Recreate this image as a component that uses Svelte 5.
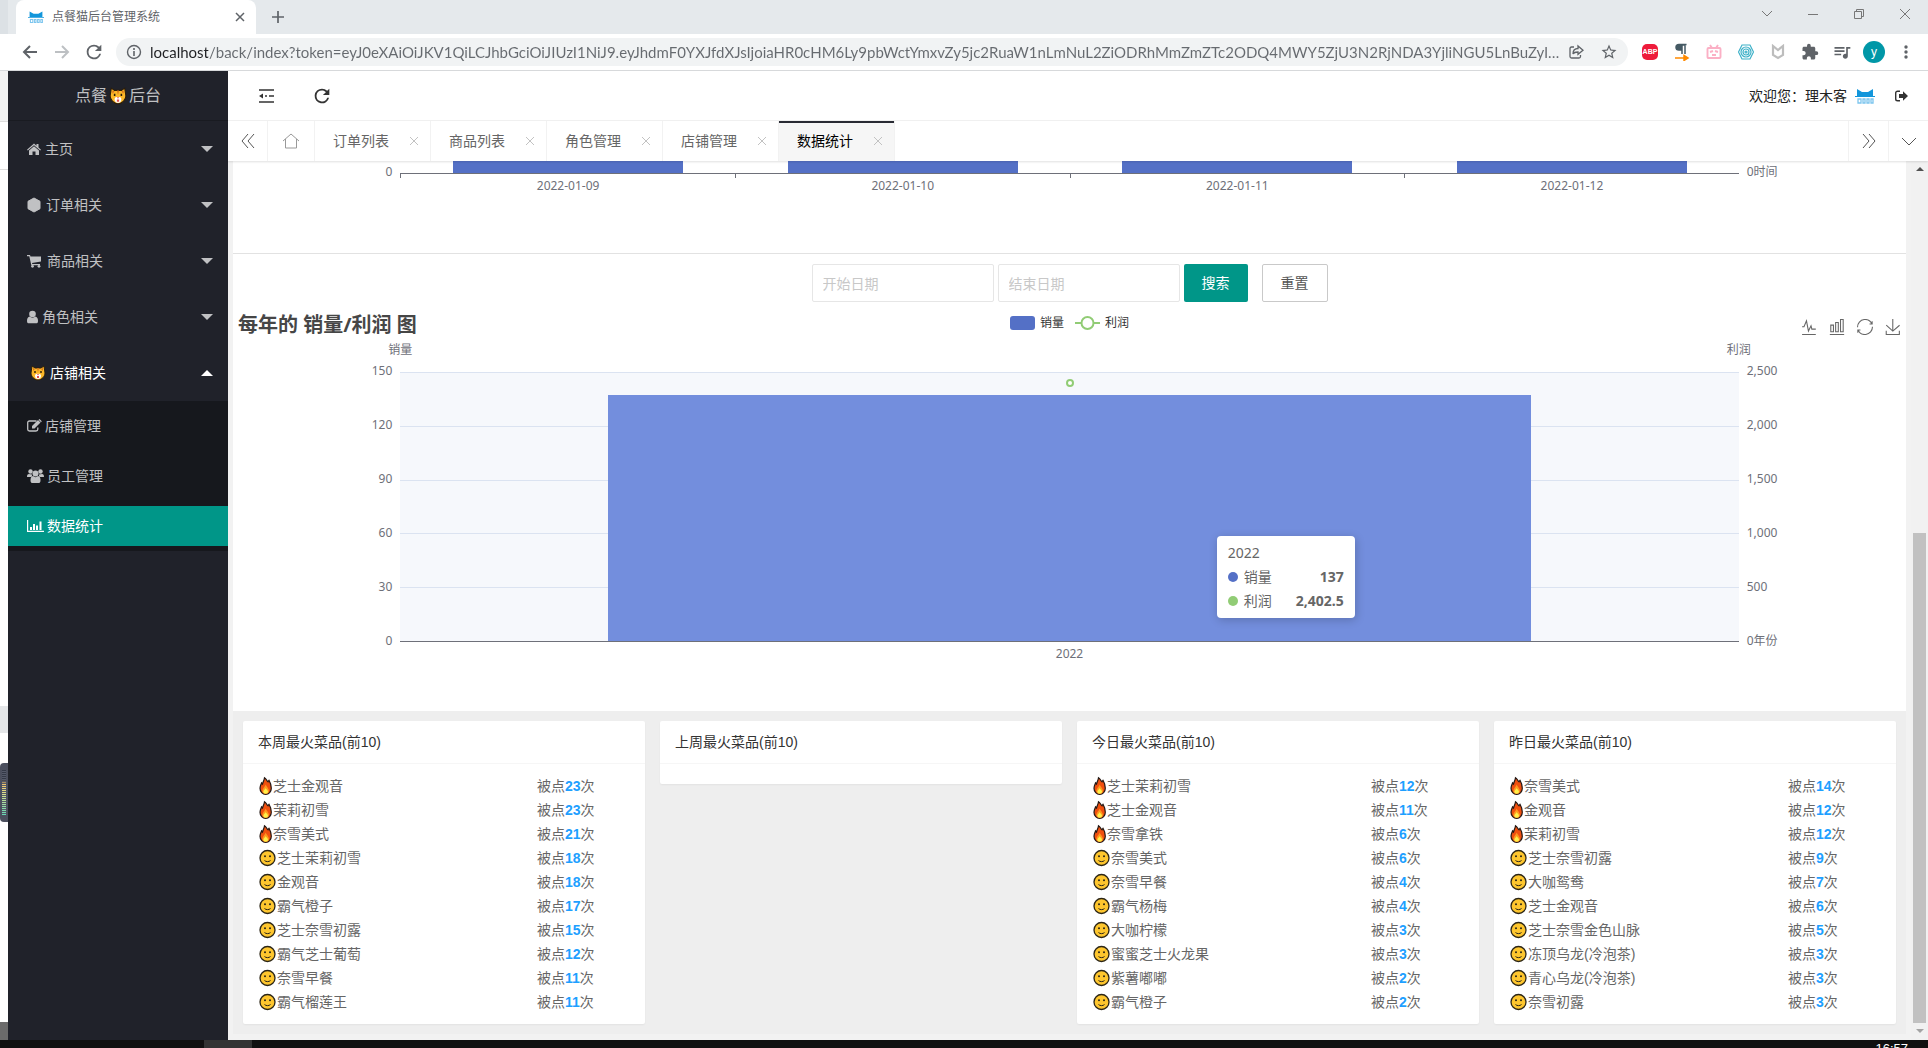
<script>
  let url = $state('localhost/back/index?token=eyJ0eXAiOiJKV1QiLCJhbGciOiJIUzI1NiJ9.eyJhdmF0YXJfdXJsIjoiaHR0cHM6Ly9pbWctYmxvZy5jc2RuaW1nLmNuL2ZiODRhMmZmZTc2ODQ4MWY5ZjU3N2RjNDA3YjliNGU5LnBuZyIsIn...');
  let start = $state('');
  let end = $state('');
  let active = $state('数据统计');

  const menu = [
    { label: '主页', icon: 'home' },
    { label: '订单相关', icon: 'cube' },
    { label: '商品相关', icon: 'cart' },
    { label: '角色相关', icon: 'user' },
    { label: '店铺相关', icon: 'cat', open: true },
  ];
  const children = [
    { label: '店铺管理', icon: 'edit' },
    { label: '员工管理', icon: 'users' },
    { label: '数据统计', icon: 'chart' },
  ];
  const tabs = ['订单列表', '商品列表', '角色管理', '店铺管理', '数据统计'];

  const days = ['2022-01-09', '2022-01-10', '2022-01-11', '2022-01-12'];
  const sales = 137;
  const profit = 2402.5;
  const leftTicks = ['150', '120', '90', '60', '30', '0'];
  const rightTicks = ['2,500', '2,000', '1,500', '1,000', '500', '0年份'];

  const tools = [
    { name: '切换为折线图', d: 'M4.1,28.9h7.1l9.3-22l7.4,38l9.7-19.7l3,12.8h14.9M4.1,58h51.4' },
    { name: '切换为柱状图', d: 'M6.7,22.9h10V48h-10V22.9zM24.9,13h10v35h-10V13zM43.2,2h10v46h-10V2zM3.1,58h53.7' },
    { name: '还原', d: 'M47,18.9h9.8V8.7M56.3,20.1C52.1,9,40.5,0.6,26.8,2.1C12.6,3.7,1.6,16.2,2.1,30.6M13,41.1H3.1v10.2M3.7,39.9c4.2,11.1,15.8,19.5,29.5,18c14.2-1.6,25.2-14.1,24.7-28.5' },
    { name: '保存为图片', d: 'M4.7,22.9L29.3,45.5L54.7,23.4M4.6,43.6L4.6,58L53.8,58L53.8,43.6M29.2,45.1L29.2,0' },
  ];

  const cards = [
    {
      title: '本周最火菜品(前10)',
      rows: [['芝士金观音', 23], ['茉莉初雪', 23], ['奈雪美式', 21], ['芝士茉莉初雪', 18], ['金观音', 18],
        ['霸气橙子', 17], ['芝士奈雪初露', 15], ['霸气芝士葡萄', 12], ['奈雪早餐', 11], ['霸气榴莲王', 11]],
    },
    { title: '上周最火菜品(前10)', rows: [] },
    {
      title: '今日最火菜品(前10)',
      rows: [['芝士茉莉初雪', 12], ['芝士金观音', 11], ['奈雪拿铁', 6], ['奈雪美式', 6], ['奈雪早餐', 4],
        ['霸气杨梅', 4], ['大咖柠檬', 3], ['蜜蜜芝士火龙果', 3], ['紫薯嘟嘟', 2], ['霸气橙子', 2]],
    },
    {
      title: '昨日最火菜品(前10)',
      rows: [['奈雪美式', 14], ['金观音', 12], ['茉莉初雪', 12], ['芝士奈雪初露', 9], ['大咖鸳鸯', 7],
        ['芝士金观音', 6], ['芝士奈雪金色山脉', 5], ['冻顶乌龙(冷泡茶)', 3], ['青心乌龙(冷泡茶)', 3], ['奈雪初露', 3]],
    },
  ];

  const reload = 'M17.65 6.35A7.96 7.96 0 0 0 12 4a8 8 0 1 0 7.73 10h-2.08A6 6 0 1 1 12 6c1.66 0 3.14.69 4.22 1.78L13 11h7V4z';
  const reset = () => { start = ''; end = ''; };
</script>

{#snippet logo(size)}
  <svg width={size} height={size} viewBox="0 0 20 20">
    <path d="M2 3l5 3h6l5-3v7h2v1H0v-1h2z" fill="#1296db" />
    <path d="M3 13h3v4H3zM8 13h2v4H8zM12 13h2v4h-2zM16 13h2v4h-2z" fill="none" stroke="#7cc5ee" stroke-width="1.3" />
  </svg>
{/snippet}

{#snippet cat(size)}
  <svg width={size} height={size} viewBox="0 0 16 16">
    <path d="M2 1l3 2h6l3-2 1 7c0 3-3 7-7 7s-7-4-7-7z" fill="#fbb829" stroke="#2b1d0c" />
    <path d="M7 3h2l-1 4zM3 3l2 1-2 2zM13 3l-2 1 2 2z" fill="#d9731a" />
    <path d="M5 11c0-2 1.500-2.500 3-2 1.500-.5 3 0 3 2s-1.500 3-3 3-3-1-3-3z" fill="#fff" />
    <path d="M5 6v2M11 6v2" stroke="#2b1d0c" stroke-width="1.4" />
    <path d="M7 9h2l-1 1.5zM7 11h2v2H7z" fill="#e2504c" />
  </svg>
{/snippet}

{#snippet fire()}
  <svg width="15" height="20" viewBox="0 0 15 20">
    <path d="M6.5 1.8c2 1 2 3 3.500 4 .3-.7.6-1 1-1.500 1.500 2.500 2.300 5 2.300 8 0 3.500-2.500 6-5.600 6S2 15.800 2 12.300c0-2.300 1-3.600 1.500-5.300l1 1C5 6 6.300 4 6.500 1.800z" fill="#f0500f" stroke="#231815" stroke-width="1.2" />
    <path d="M7.700 8.500c.5 2 3.300 4 3.300 6.300 0 1.800-1.500 3-3.300 3s-3.400-1.200-3.400-3c0-2.300 3-4.300 3.400-6.300z" fill="#fe9a1f" />
    <path d="M7.700 12c.3 1.300 2.300 2.200 2.300 3.800 0 1.200-1 2-2.300 2s-2.300-.8-2.300-2c0-1.600 2-2.500 2.300-3.800z" fill="#fff04a" />
  </svg>
{/snippet}

{#snippet smile()}
  <svg width="19" height="20" viewBox="0 0 19 20">
    <circle cx="9.5" cy="10" r="7.5" fill="#fec62e" stroke="#2b2516" stroke-width="1.3" />
    <circle cx="7" cy="8.3" r="1" fill="#2b2516" /><circle cx="12" cy="8.300" r="1" fill="#2b2516" />
    <path d="M6.5 12.500c1.500 1.500 4.500 1.500 6 0" fill="none" stroke="#2b2516" />
  </svg>
{/snippet}

{#snippet icon(name)}
  {#if name === 'cat'}
    <span class="cat">{@render cat(16)}</span>
  {:else if name === 'home'}
    <svg width="14" height="14" viewBox="0 0 14 14"><path d="M7 1.500l2.500 2.200V2h2v3.500L14 7.700l-.8.900L7 3.300.800 8.600 0 7.700zM2 8.500l5-4.200 5 4.200V13H8.500V9.500h-3V13H2z" /></svg>
  {:else if name === 'cube'}
    <svg width="15" height="16" viewBox="0 0 15 16"><path d="M7 1l6 3.300v7.400L7 15l-6-3.300V4.300z" stroke="currentColor" stroke-linejoin="round" /></svg>
  {:else if name === 'cart'}
    <svg width="16" height="14" viewBox="0 0 16 14"><path d="M0 1h3l.5 1.500H14v5L5 9l.3 1H13v1.200H4.300L2.300 2.300H0z" /><circle cx="5.500" cy="12.300" r="1.400" /><circle cx="12" cy="12.300" r="1.400" /></svg>
  {:else if name === 'user'}
    <svg width="11" height="14" viewBox="0 0 11 14"><circle cx="5.500" cy="4" r="3.300" /><path d="M2.500 6.500c2 1.500 4 1.500 6 0C10.500 7 11 9 11 11s-1 2.300-2 2.300H2c-1 0-2-.3-2-2.300s.5-4 2.500-4.500z" /></svg>
  {:else if name === 'edit'}
    <svg width="15" height="14" viewBox="0 0 15 14"><path d="M9.500 2H2.500C1.500 2 .7 2.800.7 3.800v6.400c0 1 .8 1.800 1.800 1.800h6.500c1 0 1.800-.8 1.800-1.800V8.500" fill="none" stroke="currentColor" stroke-width="1.300" /><path d="M5 7l6-6 2.500 2.500-6 6H5zM11.600.7L12.500 0 14.800 2.200l-.8 1z" /></svg>
  {:else if name === 'users'}
    <svg width="17" height="14" viewBox="0 0 17 14"><circle cx="3.500" cy="2.500" r="2.200" /><circle cx="13.500" cy="2.500" r="2.200" /><circle cx="8.500" cy="4.500" r="3" /><path d="M0 8c0-2 .5-3 2-3l3 .5C5 7 5 7.500 4 8zM17 8c0-2-.5-3-2-3l-3 .5c0 1.500 0 2 1 2.500zM6 7c2 1.500 3 1.500 5 0 2 .5 2.500 2 2.500 4.500 0 2-1 2.500-2 2.500h-6c-1 0-2-.5-2-2.500C3.500 9 4 7.500 6 7z" /></svg>
  {:else}
    <svg width="17" height="14" viewBox="0 0 17 14"><path d="M0 1h1.200v10.800H17V13H0zM3 8h2v3H3zM6 5h2v6H6zM9 6.500h2V11H9zM12.500 2.500h2V11h-2z" /></svg>
  {/if}
{/snippet}

<div class="screen">
  <div class="strip">
    <div class="browser-tab">
      {@render logo(16)}
      <span>点餐猫后台管理系统</span>
      <button aria-label="关闭标签页"><svg width="10" height="10" viewBox="0 0 10 10"><path d="M1 1l8 8M9 1L1 9" stroke="#5f6368" stroke-width="1.5" /></svg></button>
    </div>
    <button class="plus" aria-label="新标签页"><svg width="14" height="14" viewBox="0 0 14 14"><path d="M7 1v12M1 7h12" stroke="#5f6368" stroke-width="1.7" /></svg></button>
    <div class="window-buttons">
      <button aria-label="搜索标签页"><svg width="12" height="12" viewBox="0 0 12 12"><path d="M1 3l5 5 5-5" /></svg></button>
      <button aria-label="最小化"><svg width="12" height="12" viewBox="0 0 12 12"><path d="M1 6.500h10" /></svg></button>
      <button aria-label="还原窗口"><svg width="12" height="12" viewBox="0 0 12 12"><path d="M1.500 3.500h7v7h-7zM3.500 3.500v-2h7v7h-2" /></svg></button>
      <button aria-label="关闭"><svg width="12" height="12" viewBox="0 0 12 12"><path d="M1 1l10 10M11 1L1 11" /></svg></button>
    </div>
  </div>

  <div class="toolbar">
    <button aria-label="后退"><svg width="16" height="16" viewBox="0 0 16 16"><path d="M15 8H2M8 2L2 8l6 6" fill="none" stroke="#5f6368" stroke-width="2" /></svg></button>
    <button aria-label="前进"><svg width="16" height="16" viewBox="0 0 16 16"><path d="M1 8h13M8 2l6 6-6 6" fill="none" stroke="#bdc0c3" stroke-width="2" /></svg></button>
    <button aria-label="刷新页面"><svg width="22" height="22" viewBox="0 0 24 24"><path d={reload} fill="#5f6368" /></svg></button>
    <div class="omnibox">
      <svg width="16" height="16" viewBox="0 0 16 16"><circle cx="8" cy="8" r="6.500" fill="none" stroke="#5f6368" stroke-width="1.4" /><path d="M8 7v5M8 4v2" stroke="#5f6368" stroke-width="1.6" /></svg>
      <input aria-label="网址" bind:value={url} />
      <svg width="16" height="16" viewBox="0 0 16 16" fill="none" stroke="#5f6368" stroke-width="1.3"><path d="M6 3H3.500C2.500 3 2 3.500 2 4.500v8c0 1 .5 1.500 1.500 1.500H11c1 0 1.500-.5 1.500-1.500V11" /><path d="M5 10c0-4 2-5.500 5-5.500V2l5 4.200-5 4.100V8C8 8 6 8 5 10z" /></svg>
      <svg width="18" height="18" viewBox="0 0 24 24"><path fill="#5f6368" d="M22 9.240l-7.190-.62L12 2 9.190 8.630 2 9.240l5.460 4.730L5.820 21 12 17.270 18.180 21l-1.630-7.030L22 9.240zM12 15.400l-3.760 2.270 1-4.280-3.320-2.880 4.380-.38L12 6.100l1.710 4.040 4.380.38-3.320 2.880 1 4.280L12 15.400z" /></svg>
    </div>
    <div class="extensions">
      <span class="abp">ABP</span>
      <svg width="16" height="18" viewBox="0 0 16 18"><path d="M11 1v10M8 1v10M12.500 1.500H5C1 1.500 1 7 5 7h3V2z" fill="#455a64" stroke="#455a64" stroke-width="1.5" /><path d="M1 15h11M10 12.500l4 2.500-4 2.500z" fill="#ff8a00" stroke="#ff8a00" stroke-width="1.5" /></svg>
      <svg width="16" height="16" viewBox="0 0 16 16" fill="none" stroke="#fbb0c5" stroke-width="1.9"><rect x="1.500" y="4" width="13" height="10" rx="1" /><path d="M4 1l2 3M12 1l-2 3M4 8l3-1M12 8L9 7M6 11h4" /></svg>
      <svg width="16" height="16" viewBox="0 0 16 16" fill="none" stroke="#3eb1c8" stroke-width="1.2"><path d="M4 1h8l3.500 7-3.500 7H4L.5 8z" /><circle cx="8" cy="8" r="5" /><circle cx="8" cy="8" r="3" /><circle cx="8" cy="8" r="1" /></svg>
      <svg width="14" height="16" viewBox="0 0 14 16" fill="none" stroke="#bdbdbd" stroke-width="2.2"><path d="M2 11V2l5 4 5-4v9l-5 3z" /></svg>
      <svg width="18" height="18" viewBox="0 0 24 24" fill="#5f6368"><path d="M20.500 11H19V7c0-1.100-.9-2-2-2h-4V3.500a2.500 2.500 0 0 0-5 0V5H4c-1.100 0-2 .9-2 2v3.800h1.500c1.490 0 2.700 1.210 2.700 2.700S4.990 16.200 3.500 16.200H2V20c0 1.100.9 2 2 2h3.800v-1.500c0-1.490 1.210-2.700 2.700-2.700s2.700 1.210 2.700 2.700V22H17c1.100 0 2-.9 2-2v-4h1.500a2.500 2.500 0 0 0 0-5z" /></svg>
      <svg width="20" height="20" viewBox="0 0 24 24" fill="#5f6368"><path d="M15 6H3v2h12V6zm0 4H3v2h12v-2zM3 16h8v-2H3v2zM17 6v8.180c-.31-.11-.65-.18-1-.18-1.660 0-3 1.340-3 3s1.340 3 3 3 3-1.340 3-3V8h3V6h-5z" /></svg>
      <span class="avatar">y</span>
      <svg width="4" height="16" viewBox="0 0 4 16" fill="#5f6368"><circle cx="2" cy="3" r="1.700" /><circle cx="2" cy="8" r="1.700" /><circle cx="2" cy="13" r="1.700" /></svg>
    </div>
  </div>

  <div class="app">
    <div class="desktop">
      <div class="light"></div>
      <div class="outline"></div>
      <div class="spacer"></div>
      <div class="grey"></div>
      <div class="meter"></div>
      <div class="spacer small"></div>
      <div class="dark"></div>
    </div>

    <aside>
      <h1>点餐{@render cat(18)}后台</h1>
      <nav>
        {#each menu as item}
          <a href="#{item.label}" class="item" class:open={item.open}>
            {@render icon(item.icon)}
            <span class="label">{item.label}</span>
            <i class="caret"></i>
          </a>
        {/each}
        <div class="submenu">
          {#each children as item}
            <a href="#{item.label}" class:current={item.label === active}>
              {@render icon(item.icon)}<span>{item.label}</span>
            </a>
          {/each}
        </div>
      </nav>
    </aside>

    <main>
      <header>
        <button aria-label="收起菜单"><svg width="16" height="14" viewBox="0 0 16 14"><path d="M1 1h15M7 7h2M11 7h5M1 13h15" stroke="#333" stroke-width="1.6" /><path d="M1 7l4-2.500v5z" fill="#333" /></svg></button>
        <button aria-label="刷新"><svg width="22" height="22" viewBox="0 0 24 24"><path d={reload} fill="#333" /></svg></button>
        <div class="welcome">
          <span>欢迎您：理木客</span>
          {@render logo(20)}
          <button aria-label="退出"><svg width="14" height="12" viewBox="0 0 14 12"><path d="M5 1.200H2.500C1.500 1.200.7 2 .7 3v6c0 1 .8 1.800 1.800 1.800H5" fill="none" stroke="#333" stroke-width="1.4" /><path d="M4 4h4V1.200L13 6l-5 4.800V8H4z" fill="#333" /></svg></button>
        </div>
      </header>

      <div class="page-tabs">
        <button class="side" aria-label="向左"><svg width="14" height="16" viewBox="0 0 14 16"><path d="M7 1L1 8l6 7M13 1L7 8l6 7" /></svg></button>
        <button class="home" aria-label="首页"><svg width="18" height="16" viewBox="0 0 18 16"><path d="M1 8l8-7 8 7M3.500 6v9h11V6" /></svg></button>
        {#each tabs as tab}
          <div class="tab" class:active={tab === active}>
            <button onclick={() => (active = tab)}>{tab}</button>
            <button class="close" aria-label="关闭{tab}"><svg width="8" height="8" viewBox="0 0 8 8"><path d="M0 0l8 8M8 0L0 8" /></svg></button>
          </div>
        {/each}
        <span class="fill"></span>
        <button class="side right" aria-label="向右"><svg width="14" height="16" viewBox="0 0 14 16"><path d="M1 1l6 7-6 7M7 1l6 7-6 7" /></svg></button>
        <button class="side right" aria-label="更多"><svg width="14" height="16" viewBox="0 0 14 16"><path d="M0 5l7 7 7-7" /></svg></button>
      </div>

      <div class="view">
        <div class="page">
          <section class="panel">
            <div class="daily">
              <div class="axis left"><span>0</span></div>
              <div class="plot-days">
                {#each days as day}
                  <div class="day"><div class="bar"></div><span>{day}</span></div>
                {/each}
              </div>
              <div class="axis right"><span>0时间</span></div>
            </div>

            <form onsubmit={(e) => e.preventDefault()}>
              <input type="text" placeholder="开始日期" aria-label="开始日期" bind:value={start} />
              <input type="text" placeholder="结束日期" aria-label="结束日期" bind:value={end} />
              <button class="search">搜索</button>
              <button type="button" class="reset" onclick={reset}>重置</button>
            </form>

            <div class="yearly">
              <div class="chart-head">
                <h2>每年的 销量/利润 图</h2>
                <div class="legend">
                  <i class="swatch"></i><span>销量</span>
                  <svg width="25" height="14" viewBox="0 0 25 14"><path d="M0 7h25" stroke="#91cc75" stroke-width="2" /><circle cx="12.500" cy="7" r="6" fill="#fff" stroke="#91cc75" stroke-width="2" /></svg><span>利润</span>
                </div>
                <div class="tools">
                  {#each tools as tool}
                    <button aria-label={tool.name}><svg width="16" height="16" viewBox="0 0 60 60"><path d={tool.d} /></svg></button>
                  {/each}
                </div>
              </div>
              <div class="names"><span>销量</span><span>利润</span></div>
              <div class="chart">
                <div class="axis left">{#each leftTicks as tick}<span>{tick}</span>{/each}</div>
                <div class="plot">
                  <div class="lines">{#each leftTicks.slice(1) as tick (tick)}<div></div>{/each}</div>
                  <div class="bar" style="height: {sales / 150 * 100}%"></div>
                  <svg class="point" style="bottom: {profit / 2500 * 100}%" width="8" height="8" viewBox="0 0 8 8"><circle cx="4" cy="4" r="3" fill="#fff" stroke="#91cc75" stroke-width="2" /></svg>
                  <div class="tooltip">
                    <div>2022</div>
                    <div class="line"><i></i>销量<b>{sales}</b></div>
                    <div class="line green"><i></i>利润<b>{profit.toLocaleString('en-US')}</b></div>
                  </div>
                </div>
                <div class="axis right">{#each rightTicks as tick}<span>{tick}</span>{/each}</div>
              </div>
              <div class="year">2022</div>
            </div>
          </section>

          <section class="cards">
            {#each cards as card}
              <article>
                <h3>{card.title}</h3>
                <ul>
                  {#each card.rows as [name, count], i}
                    <li>
                      <span class="dish">{#if i < 3}{@render fire()}{:else}{@render smile()}{/if}{name}</span>
                      <span>被点<b>{count}</b>次</span>
                    </li>
                  {/each}
                </ul>
              </article>
            {/each}
          </section>
        </div>
        <div class="scrollbar">
          <svg width="8" height="5" viewBox="0 0 8 5"><path d="M4 0l4 4H0z" fill="#505050" /></svg>
          <div class="track"><div class="thumb"></div></div>
          <svg width="8" height="5" viewBox="0 0 8 5"><path d="M0 0h8L4 4z" fill="#a3a3a3" /></svg>
        </div>
      </div>
    </main>
  </div>

  <div class="taskbar"><span class="task"></span><time>16:57</time></div>
</div>

<style>
  :global(body) {
    margin: 0;
  }
  .screen, .screen :global(*) {
    box-sizing: border-box;
  }
  .screen {
    display: flex;
    flex-direction: column;
    height: 100vh;
    overflow: hidden;
    background: #fff;
    color: #666;
    font: 14px/24px "Liberation Sans", "Noto Sans CJK SC", sans-serif;
  }
  button {
    display: flex;
    align-items: center;
    justify-content: center;
    padding: 0;
    border: 0;
    background: none;
    color: inherit;
    font: inherit;
    cursor: pointer;
  }
  h1, h2, h3, ul {
    margin: 0;
    padding: 0;
    font-weight: normal;
    list-style: none;
  }
  a {
    color: inherit;
    text-decoration: none;
  }
  svg {
    flex: none;
  }

  .strip {
    display: flex;
    flex: none;
    align-items: center;
    height: 34px;
    padding-left: 8px;
    border-left: 8px solid #dce1e5;
    background: #e5e9ec;
  }
  .browser-tab {
    display: flex;
    align-items: center;
    gap: 8px;
    width: 240px;
    height: 34px;
    padding: 0 11px 0 12px;
    border-radius: 8px 8px 0 0;
    background: #fff;
    color: #5f6368;
    font-size: 12px;
  }
  .browser-tab span {
    flex: 1;
  }
  .plus {
    margin-left: 15px;
  }
  .window-buttons {
    display: flex;
    margin-left: auto;
    padding-bottom: 6px;
  }
  .window-buttons button {
    width: 46px;
    height: 28px;
  }
  .window-buttons path {
    fill: none;
    stroke: #777;
  }

  .toolbar {
    display: flex;
    flex: none;
    align-items: center;
    height: 37px;
    padding-left: 14px;
    border-bottom: 1px solid #d7d9db;
  }
  .toolbar > button {
    width: 32px;
    height: 28px;
  }
  .omnibox {
    display: flex;
    flex: 1;
    align-items: center;
    gap: 16px;
    height: 28px;
    margin-left: 6px;
    padding: 0 10px;
    border-radius: 14px;
    background: #f1f3f4;
  }
  .omnibox input {
    flex: 1;
    min-width: 0;
    margin: 0 -8px;
    padding: 0;
    border: 0;
    outline: 0;
    background: linear-gradient(90deg, #202124 58px, #666a6f 58px);
    background-clip: text;
    color: transparent;
    font: 15px/24px Lato, sans-serif;
    text-overflow: ellipsis;
  }
  .extensions {
    display: grid;
    grid-template-columns: repeat(9, 32px);
    align-items: center;
    justify-items: center;
    padding: 0 6px;
  }
  .abp {
    width: 16px;
    border-radius: 5px;
    background: #ee1b3b;
    color: #fff;
    font-size: 7px;
    font-weight: bold;
    line-height: 16px;
    text-align: center;
  }
  .avatar {
    width: 22px;
    border-radius: 50%;
    background: #0097a7;
    color: #fff;
    font-size: 12px;
    line-height: 22px;
    text-align: center;
  }

  .app {
    display: flex;
    flex: 1;
    min-height: 0;
  }
  .desktop {
    display: flex;
    flex: none;
    flex-direction: column;
    width: 8px;
  }
  .spacer {
    flex: 536;
  }
  .spacer.small {
    flex: 200;
  }
  .light {
    height: 50px;
    background: #f2f2f2;
  }
  .outline {
    height: 49px;
    border: solid #ddd;
    border-width: 1px 0;
  }
  .grey {
    height: 27px;
    margin-bottom: 30px;
    background: #e4e6e8;
  }
  .meter {
    height: 59px;
    border: solid #4b4f5e;
    border-width: 7px 2px;
    border-radius: 4px 0 0 4px;
    background:
      repeating-linear-gradient(transparent 0 1px, #555a6a 1px 2px),
      linear-gradient(#333846 10px, #f0c36a 14px, #d9e08a 24px, #63d8b5);
  }
  .dark {
    height: 18px;
    background: #6b6b6b;
  }

  aside {
    flex: none;
    width: 220px;
    background: #20222a;
    color: #c0c1c3;
  }
  h1 {
    display: flex;
    align-items: center;
    justify-content: center;
    gap: 2px;
    height: 50px;
    border-bottom: 1px solid #191b21;
    font-size: 16px;
  }
  .item {
    display: flex;
    align-items: center;
    height: 56px;
    padding: 0 15px 0 19px;
  }
  aside svg {
    fill: currentColor;
  }
  .label {
    flex: 1;
    margin-left: 4px;
  }
  .cat {
    display: flex;
    margin-left: 3px;
  }
  .caret {
    border: 6px solid transparent;
    border-top-color: currentColor;
    border-bottom: 0;
  }
  .open {
    color: #fff;
  }
  .open .caret {
    border-top: 0;
    border-bottom: 6px solid currentColor;
  }
  .submenu {
    display: flex;
    flex-direction: column;
    gap: 10px;
    padding: 5px 0;
    background: #16181d;
  }
  .submenu a {
    display: flex;
    align-items: center;
    gap: 3px;
    height: 40px;
    padding-left: 19px;
  }
  .submenu .current {
    background: #009688;
    color: #fff;
  }

  main {
    display: flex;
    flex: 1;
    flex-direction: column;
    min-width: 0;
  }
  header {
    display: flex;
    flex: none;
    align-items: center;
    gap: 37px;
    height: 50px;
    padding: 0 19px 0 30px;
    border-bottom: 1px solid #f2f2f2;
    color: #222;
  }
  .welcome {
    display: flex;
    align-items: center;
    gap: 8px;
    margin-left: auto;
  }
  .welcome button {
    margin-left: 12px;
  }
  .page-tabs {
    z-index: 1;
    display: flex;
    flex: none;
    height: 40px;
    box-shadow: 0 1px 2px rgba(0, 0, 0, .12);
  }
  .page-tabs path {
    fill: none;
    stroke: #555;
  }
  .page-tabs .side, .page-tabs .home {
    width: 40px;
    border-right: 1px solid #f2f2f2;
  }
  .page-tabs .home {
    width: 47px;
  }
  .page-tabs .right {
    border-right: 0;
    border-left: 1px solid #f2f2f2;
  }
  .tab {
    display: flex;
    align-items: center;
    justify-content: space-between;
    width: 116px;
    padding: 0 12px 0 18px;
    border-right: 1px solid #f2f2f2;
  }
  .tab.active {
    background: #f6f6f6;
    box-shadow: inset 0 2px #292b34;
    color: #000;
  }
  .page-tabs .home path {
    stroke: #999;
  }
  .page-tabs .close path {
    stroke: #c2c2c2;
  }
  .fill {
    flex: 1;
  }

  .view {
    display: flex;
    flex: 1;
    min-height: 0;
    background: #f2f2f2;
  }
  .page {
    flex: 1;
    min-width: 0;
    padding: 0 5px;
  }
  .panel {
    padding-bottom: 49px;
    background: #fff;
    color: #6e7079;
    font: 12px/16px "Noto Sans", "Noto Sans CJK SC", sans-serif;
  }
  .daily {
    display: flex;
    height: 93px;
    border-bottom: 1px solid #e2e2e2;
  }
  .axis {
    display: flex;
    flex-direction: column;
    justify-content: space-between;
    width: 10%;
    padding: 0 8px;
  }
  .axis.left {
    text-align: right;
  }
  .daily .axis {
    justify-content: flex-start;
    padding-top: 3px;
  }
  .plot-days {
    display: flex;
    flex: 1;
  }
  .day {
    display: flex;
    flex: 1;
    flex-direction: column;
    align-items: center;
    gap: 5px;
    height: 17px;
    border: solid;
    border-width: 0 0 0 1px;
    border-image: linear-gradient(transparent 12px, #6e7079 12px) 1;
    background: linear-gradient(#fff 12px, #6e7079 12px 13px, transparent 13px);
  }
  .day .bar {
    flex: none;
    width: 69%;
    height: 12px;
    background: #5470c6;
  }

  form {
    display: flex;
    justify-content: center;
    gap: 4px;
    padding-top: 10px;
    font-size: 14px;
  }
  form input {
    width: 182px;
    height: 38px;
    padding: 0 10px;
    border: 1px solid #e6e6e6;
    border-radius: 2px;
    font: inherit;
  }
  form input::placeholder {
    color: #c8c8c8;
  }
  form button {
    height: 38px;
    padding: 0 18px;
    border-radius: 2px;
  }
  .search {
    background: #009688;
    color: #fff;
  }
  .reset {
    margin-left: 10px;
    border: 1px solid #c9c9c9;
    color: #555;
  }

  .chart-head {
    display: grid;
    grid-template-columns: 1fr auto 1fr;
    align-items: center;
    height: 38px;
    padding: 8px 5px 0;
  }
  h2 {
    color: #464646;
    font-size: 20px;
    font-weight: bold;
    line-height: 30px;
  }
  .legend {
    display: flex;
    align-items: center;
    gap: 5px;
    padding-bottom: 4px;
    color: #333;
  }
  .legend svg {
    margin-left: 6px;
  }
  .swatch {
    width: 25px;
    height: 14px;
    border-radius: 3px;
    background: #5470c6;
  }
  .tools {
    display: flex;
    justify-content: flex-end;
    gap: 12px;
    padding-top: 4px;
  }
  .tools path {
    fill: none;
    stroke: #666;
    stroke-width: 4;
  }
  .names {
    display: flex;
    justify-content: space-between;
    margin-bottom: 12px;
    padding: 0 10%;
    line-height: 20px;
  }
  .names span {
    margin: 0 -12px;
  }
  .chart {
    display: flex;
    height: 270px;
  }
  .chart .axis {
    margin: -9px 0 -7px;
  }
  .plot {
    position: relative;
    display: grid;
    flex: 1;
    grid-template-rows: 100%;
    border-bottom: 1px solid #6e7079;
    background: #f6f8fc;
  }
  .plot > * {
    grid-area: 1 / 1;
  }
  .lines {
    display: flex;
    flex-direction: column;
  }
  .lines div {
    flex: 1;
    border-top: 1px solid #dbe3f1;
  }
  .plot .bar {
    align-self: end;
    justify-self: center;
    width: 69%;
    background: #738edd;
  }
  .point {
    position: absolute;
    left: calc(50% - 4px);
    margin-bottom: -4px;
  }
  .tooltip {
    position: absolute;
    top: 61%;
    left: 61%;
    display: flex;
    flex-direction: column;
    gap: 10px;
    width: 138px;
    padding: 10px 11px;
    border-radius: 4px;
    background: #fff;
    box-shadow: 1px 2px 10px rgba(0, 0, 0, .2);
    color: #666;
    font-size: 14px;
    line-height: 14px;
  }
  .line {
    display: flex;
    align-items: center;
    gap: 6px;
  }
  .line i {
    width: 10px;
    height: 10px;
    border-radius: 50%;
    background: #5470c6;
  }
  .line.green i {
    background: #91cc75;
  }
  .line b {
    margin-left: auto;
  }
  .year {
    padding-top: 4px;
    text-align: center;
  }

  .cards {
    display: grid;
    grid-template-columns: repeat(4, 1fr);
    align-items: start;
    gap: 15px;
    padding: 10px;
    background: #eee;
  }
  article {
    border-radius: 2px;
    background: #fff;
    box-shadow: 0 1px 2px rgba(0, 0, 0, .05);
  }
  h3 {
    padding: 0 15px;
    border-bottom: 1px solid #f6f6f6;
    color: #333;
    font-size: 14px;
    line-height: 42px;
  }
  ul {
    padding: 10px 15px;
  }
  li {
    display: flex;
    height: 24px;
  }
  .dish {
    display: flex;
    align-items: center;
    width: 75%;
  }
  li b {
    color: #1e9fff;
  }

  .scrollbar {
    display: flex;
    flex: none;
    flex-direction: column;
    align-items: center;
    width: 17px;
    padding: 6px 0;
    background: #f1f1f1;
  }
  .track {
    display: flex;
    flex: 1;
    align-items: flex-end;
    padding: 6px 0;
  }
  .thumb {
    width: 13px;
    height: 58%;
    background: #c1c1c1;
  }

  .taskbar {
    display: flex;
    flex: none;
    justify-content: space-between;
    height: 8px;
    overflow: hidden;
    padding: 0 20px 0 204px;
    background: #101010;
  }
  .task {
    width: 48px;
    background: #333;
  }
  time {
    color: #fff;
    font-size: 13px;
    line-height: 18px;
  }
</style>
